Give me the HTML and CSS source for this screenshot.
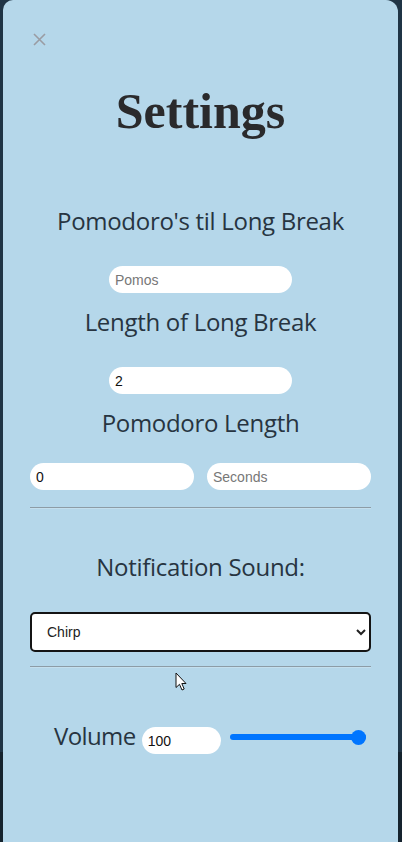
FILE: index.html
```html
<!DOCTYPE html>
<html lang="en">
<head>
<meta charset="utf-8">
<title>Settings</title>
<link rel="stylesheet" href="styles.css">
</head>
<body>
<div class="modal">
  <button class="close" aria-label="Close">
    <svg width="13" height="13" viewBox="0 0 13 13"><path d="M1 1L12 12M12 1L1 12" stroke="#9a9ca3" stroke-width="1.6" fill="none"/></svg>
  </button>
  <h1 class="title">Settings</h1>

  <div class="label l1">Pomodoro's til Long Break</div>
  <div class="field f1"><input class="pill" type="text" placeholder="Pomos"></div>

  <div class="label l2">Length of Long Break</div>
  <div class="field f2"><input class="pill" type="text" value="2"></div>

  <div class="label l3">Pomodoro Length</div>
  <div class="pair">
    <input class="pill" type="text" value="0">
    <input class="pill" type="text" placeholder="Seconds">
  </div>

  <hr class="rule r1">

  <div class="label l4">Notification Sound:</div>
  <select class="sound">
    <option>Chirp</option>
    <option>Bell</option>
  </select>

  <hr class="rule r2">

  <div class="volume">
    <span class="vol-label">Volume</span>
    <input class="pill vol-input" type="text" value="100">
    <input class="slider" type="range" min="0" max="100" value="100">
  </div>

  <svg class="cursor" width="12" height="19" viewBox="0 0 12 19"><path d="M1 1 L1 15.5 L4.5 12.3 L7 18 L9.2 17 L6.8 11.5 L11 11.5 Z" fill="#fff" stroke="#111" stroke-width="1" stroke-linejoin="round"/></svg>
</div>
</body>
</html>
```

FILE: styles.css
```css
* { box-sizing: border-box; }

html, body {
  margin: 0;
  padding: 0;
}

body {
  width: 402px;
  height: 842px;
  overflow: hidden;
  background: linear-gradient(to bottom, #1f3445 0, #1f3445 752px, #15232e 752px);
  font-family: "Open Sans", "Noto Sans", sans-serif;
}

.modal {
  position: relative;
  margin: 0 4px 0 3px;
  height: 842px;
  background: #b5d7ea;
  border-radius: 10px 12px 0 0;
  padding: 33px 27px 0 27px;
}

.close {
  display: block;
  margin: 0 0 0 3px;
  padding: 0;
  border: 0;
  background: none;
  width: 13px;
  height: 13px;
  line-height: 0;
}

.title {
  margin: 40px 0 0;
  text-align: center;
  font-family: "Liberation Serif", "Times New Roman", serif;
  font-weight: bold;
  font-size: 50px;
  line-height: 50px;
  color: #2a2a2c;
}

.label {
  text-align: center;
  font-size: 24px;
  line-height: 30px;
  color: #273441;
  letter-spacing: -0.3px;
}

.l1 { margin-top: 70px; }
.l2 { margin-top: 14px; }
.l3 { margin-top: 14px; }
.l4 { margin-top: 43px; }

.field {
  display: flex;
  justify-content: center;
  margin-top: 30px;
}

.pill {
  height: 27px;
  border: 0;
  border-radius: 14px;
  background: #fff;
  padding: 0 6px;
  font-family: "Liberation Sans", Arial, sans-serif;
  font-size: 14px;
  color: #111;
  outline: none;
}

.pill::placeholder { color: #777; }

.field .pill { width: 183px; }

.pair {
  display: flex;
  gap: 13px;
  margin-top: 25px;
}

.pair .pill { flex: 1; width: 0; }

.rule {
  margin: 0;
  border: 0;
  border-top: 1px solid #8d9ca6;
  border-bottom: 1px solid #c4dfee;
}

.r1 { margin-top: 17px; }
.r2 { margin-top: 14px; }

.sound {
  display: block;
  width: 100%;
  height: 40px;
  margin-top: 30px;
  border: 2px solid #141414;
  border-radius: 5px;
  background: #fff;
  padding: 0 8px 0 11px;
  font-family: "Liberation Sans", Arial, sans-serif;
  font-size: 14px;
  color: #222;
}

.volume {
  display: flex;
  align-items: flex-start;
  margin-top: 53px;
  padding-left: 24px;
}

.vol-label {
  font-size: 24px;
  line-height: 30px;
  color: #273441;
  letter-spacing: -0.6px;
}

.vol-input {
  width: 79px;
  margin-left: 6px;
  margin-top: 6px;
}

.slider {
  -webkit-appearance: none;
  appearance: none;
  width: 136px;
  height: 16px;
  margin: 8px 0 0 9px;
  background: transparent;
}

.slider::-webkit-slider-runnable-track {
  height: 6px;
  border-radius: 3px;
  background: #0075ff;
}

.slider::-webkit-slider-thumb {
  -webkit-appearance: none;
  width: 15px;
  height: 15px;
  border-radius: 50%;
  background: #0075ff;
  margin-top: -4.5px;
}

.cursor {
  position: absolute;
  left: 172px;
  top: 672px;
}
```
